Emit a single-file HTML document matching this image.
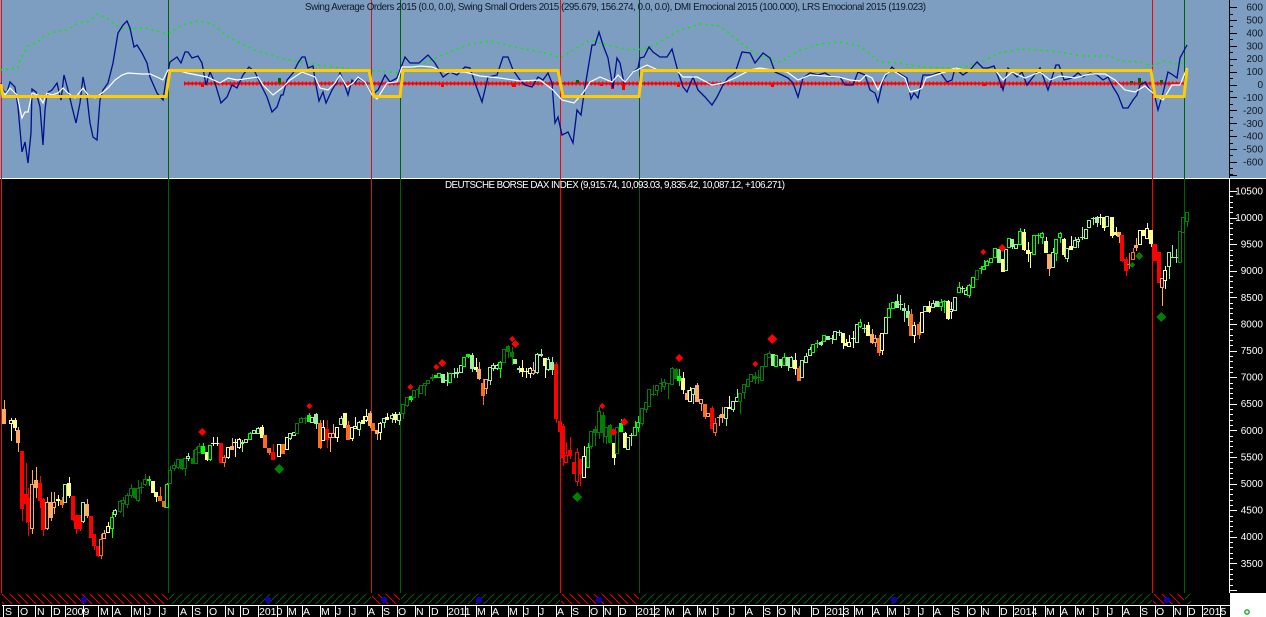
<!DOCTYPE html>
<html><head><meta charset="utf-8"><title>DAX</title>
<style>
html,body{margin:0;padding:0;background:#000;width:1266px;height:617px;overflow:hidden}
svg{display:block;font-family:"Liberation Sans",Arial,sans-serif}
.t text{font-size:10px;fill:#101a28;text-anchor:end}
.b text{font-size:10px;fill:#fff;text-anchor:end}
.m text{font-size:10.5px;fill:#fff}
</style></head><body>
<svg id="s" xmlns="http://www.w3.org/2000/svg" width="1266" height="617" viewBox="0 0 1266 617">
<defs>
<pattern id="hr" width="8" height="8" patternUnits="userSpaceOnUse"><path d="M-1 -1L9 9" stroke="#e80000" stroke-width="1" fill="none"/></pattern>
<pattern id="hg" width="8" height="8" patternUnits="userSpaceOnUse"><path d="M-1 9L9 -1" stroke="#006000" stroke-width="1" fill="none"/></pattern>
</defs>
<rect width="1266" height="617" fill="#000"/>
<rect width="1266" height="178" fill="#7d9dc1"/>
<rect x="0" y="178" width="1266" height="1" fill="#fff"/>
<rect x="1230" y="593" width="36" height="24" fill="#fff"/>

<!-- vertical markers -->
<g shape-rendering="crispEdges">
<rect x="1" y="0" width="1" height="593" fill="#e81010"/>
<rect x="168" y="0" width="1" height="593" fill="#006000"/>
<rect x="371" y="0" width="1" height="593" fill="#c81818"/>
<rect x="400" y="0" width="1" height="593" fill="#006000"/>
<rect x="560" y="0" width="1" height="593" fill="#ff0000"/>
<rect x="639" y="0" width="1" height="593" fill="#0a5028"/>
<rect x="1152" y="0" width="1" height="593" fill="#ff0000"/>
<rect x="1184" y="0" width="1" height="593" fill="#006000"/>
</g>

<!-- oscillator -->
<polyline fill="none" stroke="#00f000" stroke-width="1.5" stroke-dasharray="2 4" points="0,70 18,68 20,60 28,46 38,42 45,35 58,31 68,30 78,23 90,21 97,14 107,18 115,25 125,29 145,28 168,34 182,25 198,21 212,24 230,38 255,50 280,58 300,62 340,68 400,73 420,65 440,56 470,44 490,41 510,46 530,50 550,54 560,58 575,49 590,40 610,46 630,50 645,49 660,42 680,30 700,24 720,26 735,38 750,50 765,58 780,62 800,50 820,44 840,42 860,46 880,62 900,63 915,66 945,68 965,67 985,60 1000,53 1020,49 1040,50 1060,52 1080,56 1110,56 1120,61 1140,62 1152,66 1165,61 1175,64 1187,63"/>
<path d="M184 83.5H1187" stroke="#ff0000" stroke-width="2" fill="none"/>
<path d="M184 83.5H1187" stroke="#ff0000" stroke-width="4" stroke-dasharray="1.4 2.4" fill="none"/>
<g fill="#ff0000"><rect x="201" y="84" width="3" height="3"/><rect x="441" y="84" width="3" height="3"/><rect x="512" y="84" width="4" height="3"/><rect x="600" y="84" width="3" height="2"/><rect x="611" y="84" width="3" height="5"/><rect x="622" y="84" width="3" height="6"/><rect x="677" y="84" width="3" height="3"/><rect x="771" y="84" width="3" height="3"/><rect x="982" y="84" width="4" height="2"/><rect x="1000" y="84" width="3" height="4"/></g>
<g fill="#006400"><rect x="278" y="78" width="3" height="5"/><rect x="576" y="80" width="3" height="3"/><rect x="1130" y="81" width="3" height="2"/><rect x="1138" y="78" width="3" height="5"/><rect x="1160" y="80" width="3" height="3"/></g>
<polyline fill="none" stroke="#000f8c" stroke-width="1.3" points="1,83 4,92 7,92 10,82 15,87 18,107 22,152 25,142 28,163 31,133 32,89 36,92 40,107 43,145 45,110 47,93 52,90 57,83 61,100 64,75 68,90 72,107 76,123 80,103 83,77 87,97 90,123 93,137 97,140 100,100 103,90 108,83 113,63 118,33 123,25 127,21 130,28 134,47 137,45 142,53 147,63 150,77 157,93 163,100 166,80 170,62 177,57 181,63 185,52 188,52 192,58 198,56 202,63 206,85 210,72 215,83 221,103 227,97 232,85 237,88 243,75 249,67 255,72 260,83 267,97 272,112 277,107 281,95 283,95 287,80 293,73 298,63 302,57 305,57 308,68 313,66 315,80 319,101 323,92 326,103 332,90 337,82 340,73 343,80 348,95 352,80 355,83 358,78 365,82 372,95 378,90 385,75 390,82 397,78 400,70 405,57 410,63 419,63 428,55 435,63 443,77 450,72 457,75 465,67 470,68 475,83 482,102 488,77 497,75 503,57 508,57 513,70 520,80 525,85 532,87 538,77 543,80 548,73 552,83 555,123 558,117 562,135 568,132 573,143 577,110 581,115 585,87 592,45 595,45 599,32 603,45 608,58 613,88 617,58 620,63 624,83 632,73 638,68 640,58 644,57 649,47 653,52 660,57 667,57 672,49 677,68 683,87 687,92 693,77 698,90 705,97 712,105 717,97 723,85 728,78 735,73 742,52 750,53 755,63 763,53 770,58 775,72 782,75 788,78 793,83 798,97 803,78 810,73 818,75 825,73 832,77 840,77 845,85 853,85 858,72 865,75 870,90 875,93 878,102 883,80 892,67 897,72 907,78 911,99 914,93 918,98 923,75 932,75 940,72 947,82 952,80 955,68 963,75 970,70 977,62 983,68 988,68 994,66 1000,82 1003,90 1008,68 1017,77 1022,72 1027,85 1033,77 1040,68 1048,90 1056,65 1059,65 1064,80 1072,78 1078,73 1083,77 1090,73 1097,75 1103,80 1108,77 1113,87 1118,95 1123,108 1128,108 1133,100 1137,95 1140,85 1145,82 1148,87 1155,97 1158,110 1163,93 1168,72 1173,75 1177,78 1180,58 1187,45"/>
<polyline fill="none" stroke="#fff" stroke-width="1.2" points="1,88 5,95 10,88 17,95 22,118 25,112 28,112 32,93 38,95 43,103 47,93 52,95 58,93 63,88 68,93 75,98 83,88 88,95 95,98 102,93 108,88 115,80 122,75 128,73 142,74 150,74 157,77 163,80 168,70 177,70 187,73 197,75 207,77 220,83 228,78 237,80 258,77 263,85 273,95 282,88 290,80 302,72 315,77 320,88 328,90 335,83 340,75 347,87 353,83 358,77 365,82 372,95 377,99 387,83 397,82 402,67 413,67 420,66 432,67 445,72 465,72 480,76 500,78 520,81 540,80 553,90 562,100 574,103 583,93 590,82 600,77 612,82 618,75 625,82 633,72 647,65 660,71 677,71 683,77 697,77 712,85 723,83 735,78 750,70 760,68 773,70 787,72 798,80 810,75 839,77 850,80 860,81 866,75 872,78 878,90 885,75 892,70 905,78 910,92 918,90 922,88 926,78 935,75 945,72 955,68 965,70 975,70 985,70 995,70 1003,80 1012,72 1025,78 1040,72 1050,80 1060,76 1075,78 1090,74 1105,74 1115,80 1125,90 1135,92 1145,86 1155,95 1163,100 1172,85 1180,85 1187,68"/>
<polyline fill="none" stroke="#ffcc00" stroke-width="3" stroke-linejoin="miter" points="1,84 3,96.5 166,96.5 170,70.5 369,70.5 374,96.5 400,96.5 403,70.5 558,70.5 563,96.5 639,96.5 642,70.5 1151,70.5 1155,96.5 1184,96.5 1187,69"/>

<text x="305" y="10" font-size="9.8" fill="#101a28" textLength="621" lengthAdjust="spacing">Swing Average Orders 2015 (0.0, 0.0), Swing Small Orders 2015 (295.679, 156.274, 0.0, 0.0), DMI Emocional 2015 (100.000), LRS Emocional 2015 (119.023)</text>
<text x="445" y="188" font-size="9.8" fill="#fff" textLength="340" lengthAdjust="spacing">DEUTSCHE BORSE DAX INDEX (9,915.74, 10,093.03, 9,835.42, 10,087.12, +106.271)</text>

<!-- axes -->
<rect x="1229" y="0" width="1" height="178" fill="#000"/>
<rect x="1229" y="179" width="1" height="414" fill="#fff"/>
<g id="ticks" shape-rendering="crispEdges"></g>
<g class="t">
<text x="1263" y="10.5">600</text><text x="1263" y="23.5">500</text><text x="1263" y="36.5">400</text><text x="1263" y="49.5">300</text><text x="1263" y="62">200</text><text x="1263" y="75">100</text><text x="1263" y="88">0</text><text x="1263" y="101">-100</text><text x="1263" y="114">-200</text><text x="1263" y="127">-300</text><text x="1263" y="139.5">-400</text><text x="1263" y="152.5">-500</text><text x="1263" y="165.5">-600</text>
</g>
<g class="b">
<text x="1263" y="194.5">10500</text><text x="1263" y="221">10000</text><text x="1263" y="247.5">9500</text><text x="1263" y="274">9000</text><text x="1263" y="301">8500</text><text x="1263" y="327.5">8000</text><text x="1263" y="354">7500</text><text x="1263" y="380.5">7000</text><text x="1263" y="407">6500</text><text x="1263" y="434">6000</text><text x="1263" y="460.5">5500</text><text x="1263" y="487">5000</text><text x="1263" y="513.5">4500</text><text x="1263" y="540">4000</text><text x="1263" y="567">3500</text>
</g>

<!-- hatch strip -->
<g>
<rect x="2" y="594" width="166" height="10" fill="url(#hr)"/>
<rect x="169" y="594" width="202" height="10" fill="url(#hg)"/>
<rect x="372" y="594" width="28" height="10" fill="url(#hr)"/>
<rect x="401" y="594" width="159" height="10" fill="url(#hg)"/>
<rect x="561" y="594" width="78" height="10" fill="url(#hr)"/>
<rect x="640" y="594" width="512" height="10" fill="url(#hg)"/>
<rect x="1153" y="594" width="31" height="10" fill="url(#hr)"/>
<rect x="1185" y="594" width="6" height="10" fill="url(#hg)"/>
</g>
<g fill="#400040" stroke="#0000e0" stroke-width="1.6">
<circle cx="84" cy="600" r="2.4"/><circle cx="268" cy="600" r="2.4"/><circle cx="384" cy="600" r="2.4"/><circle cx="479" cy="600" r="2.4"/><circle cx="599" cy="600" r="2.4"/><circle cx="894" cy="600" r="2.4"/><circle cx="1167" cy="600" r="2.4"/>
</g>

<g id="candles" shape-rendering="crispEdges"></g>

<g fill="#ff0000" shape-rendering="crispEdges" id="dr"></g>

<!-- time axis -->
<rect x="2" y="605" width="1228" height="1" fill="#fff"/>
<g id="seps" shape-rendering="crispEdges"></g>
<g class="m">
<text x="5" y="615">S</text><text x="20" y="615">O</text><text x="37" y="615">N</text><text x="53" y="615">D</text><text x="66" y="615">2009</text>
<text x="100" y="615">M</text><text x="114" y="615">A</text><text x="133" y="615">M</text><text x="146" y="615">J</text><text x="161" y="615">J</text><text x="180" y="615">A</text><text x="194" y="615">S</text><text x="209" y="615">O</text><text x="227" y="615">N</text><text x="242" y="615">D</text><text x="259" y="615">2010</text>
<text x="288" y="615">M</text><text x="303" y="615">A</text><text x="321" y="615">M</text><text x="336" y="615">J</text><text x="351" y="615">J</text><text x="368" y="615">A</text><text x="383" y="615">S</text><text x="398" y="615">O</text><text x="416" y="615">N</text><text x="431" y="615">D</text><text x="448" y="615">2011</text>
<text x="477" y="615">M</text><text x="492" y="615">A</text><text x="509" y="615">M</text><text x="524" y="615">J</text><text x="539" y="615">J</text><text x="557" y="615">A</text><text x="572" y="615">S</text><text x="590" y="615">O</text><text x="604" y="615">N</text><text x="619" y="615">D</text><text x="637" y="615">2012</text>
<text x="666" y="615">M</text><text x="684" y="615">A</text><text x="698" y="615">M</text><text x="714" y="615">J</text><text x="730" y="615">J</text><text x="746" y="615">A</text><text x="764" y="615">S</text><text x="778" y="615">O</text><text x="793" y="615">N</text><text x="812" y="615">D</text><text x="826" y="615">2013</text>
<text x="855" y="615">M</text><text x="873" y="615">A</text><text x="888" y="615">M</text><text x="905" y="615">J</text><text x="919" y="615">J</text><text x="934" y="615">A</text><text x="953" y="615">S</text><text x="968" y="615">O</text><text x="982" y="615">N</text><text x="1000" y="615">D</text><text x="1014" y="615">2014</text>
<text x="1046" y="615">M</text><text x="1061" y="615">A</text><text x="1076" y="615">M</text><text x="1094" y="615">J</text><text x="1108" y="615">J</text><text x="1123" y="615">A</text><text x="1141" y="615">S</text><text x="1156" y="615">O</text><text x="1174" y="615">N</text><text x="1188" y="615">D</text><text x="1203" y="615">2015</text>
</g>
<circle cx="1247" cy="612" r="2.2" fill="#e8f0a0" stroke="#1aa84a" stroke-width="1.4"/>
</svg>
<script>
var D="4 A 409 423 400 423;11 y 420 423 418 440;15 Y 420 427 418 430;18 A 430 442 427 451;22 R 451 508 451 520;26 R 494 503 463 522;28 R 498 521 488 535;32 a 484 528 470 533;36 A 480 487 467 497;40 R 483 500 476 507;43 R 499 529 498 535;47 a 502 528 497 529;51 A 502 517 492 520;54 a 502 507 492 513;58 y 499 500 495 505;62 O 500 504 497 507;65 l 484 502 484 502;69 Y 483 495 477 497;73 R 496 519 496 520;76 R 515 528 515 533;80 R 515 528 515 530;83 l 502 521 502 522;87 A 504 515 499 517;91 R 516 537 516 537;94 R 534 545 534 549;98 R 546 555 546 556;101 o 539 555 534 558;104 a 533 538 530 538;108 y 526 532 522 532;112 g 517 528 512 537;115 l 510 514 509 516;120 d 501 511 500 512;123 d 500 503 497 516;127 d 495 504 493 507;131 d 488 495 484 497;135 D 488 497 488 498;138 d 488 500 480 501;141 d 487 487 482 493;145 d 479 484 474 485;149 g 479 480 476 485;153 Y 481 492 481 492;156 Y 492 496 492 501;160 O 496 500 487 500;164 O 501 506 501 507;167 g 484 507 483 507;170 d 470 483 466 483;174 d 465 468 462 470;178 d 459 467 459 468;182 D 459 468 459 469;185 d 458 468 458 475;188 l 456 458 453 460;193 D 458 463 450 463;196 d 449 463 447 463;199 d 446 452 443 452;203 G 446 453 443 453;207 Y 452 459 452 460;210 g 445 459 445 460;213 y 443 443 437 445;217 y 443 443 437 445;221 R 443 462 443 462;224 o 457 462 455 466;228 y 447 457 447 458;232 A 446 449 438 449;235 y 442 442 439 456;239 y 439 447 438 448;242 l 442 443 440 451;246 l 439 442 439 442;250 g 433 439 432 439;254 l 430 433 430 433;258 l 428 433 427 433;262 Y 427 437 425 437;265 O 435 447 435 447;269 O 448 452 448 454;273 R 452 459 444 459;279 y 444 456 444 456;283 O 444 453 444 453;287 y 437 449 437 449;290 l 433 438 433 439;294 l 432 435 432 435;297 d 423 433 423 433;301 d 418 422 417 422;305 d 418 418 417 423;309 G 415 421 413 421;312 l 417 422 417 422;316 L 414 423 413 428;320 O 423 447 420 448;323 y 427 440 420 440;327 R 429 439 420 447;330 a 433 437 433 451;333 a 433 437 424 437;337 y 427 437 427 441;341 l 418 424 416 424;345 Y 413 427 413 427;348 O 425 439 421 439;352 y 427 438 427 440;355 y 426 428 417 428;359 l 422 429 421 435;363 Y 420 423 416 423;366 y 416 420 409 421;370 A 413 425 411 427;373 O 423 430 423 430;377 A 430 433 430 439;380 y 423 432 422 439;384 l 418 422 418 427;387 Y 417 419 413 419;392 l 415 418 413 422;395 Y 414 419 412 422;399 l 414 420 412 424;403 d 404 413 404 418;407 d 397 405 397 406;411 G 396 399 396 401;414 d 390 397 390 397;418 d 389 389 387 397;421 d 385 393 385 393;425 d 383 385 383 395;428 d 380 383 380 383;432 d 377 378 374 380;436 G 375 377 375 377;439 g 373 377 373 377;443 L 374 382 374 382;447 l 380 380 372 385;450 g 373 382 373 382;454 l 373 373 368 377;457 l 372 373 368 377;461 l 365 372 365 372;464 g 357 366 357 366;468 G 354 356 354 357;472 L 355 368 353 371;476 Y 367 369 358 371;479 A 369 378 362 379;483 O 383 395 379 404;486 a 379 388 379 393;490 l 367 380 367 384;493 l 365 368 363 370;497 l 365 368 364 369;500 g 362 368 361 377;504 d 349 362 349 362;508 D 346 351 345 357;512 D 352 356 347 364;515 L 359 363 359 363;519 l 368 369 366 372;522 Y 368 371 360 376;526 y 371 371 368 377;530 y 368 373 367 377;533 a 370 373 362 374;537 l 354 372 353 373;541 l 354 355 349 356;545 Y 358 365 358 377;548 l 359 369 357 370;552 L 362 369 357 374;556 R 364 418 362 422;560 R 421 431 416 431;563 R 426 457 424 465;566 r 455 462 442 462;570 R 450 455 437 458;574 R 462 473 462 473;577 r 452 481 448 485;580 R 459 473 459 485;584 y 456 477 446 477;588 g 447 467 443 467;591 d 431 446 431 448;595 D 429 432 426 445;599 d 411 432 407 438;603 D 415 432 412 442;606 d 427 436 427 443;610 D 425 442 424 442;614 Y 443 457 443 464;617 d 427 453 427 453;621 G 423 431 419 431;625 Y 433 447 432 447;628 l 437 449 437 449;631 l 435 435 433 445;635 g 427 435 421 435;638 g 422 427 416 431;642 d 408 423 408 425;646 d 402 409 402 412;649 d 389 406 389 406;653 d 394 394 385 395;657 d 385 390 385 395;661 d 383 383 378 391;664 d 382 386 379 389;668 d 383 383 383 398;672 d 368 384 367 384;676 D 369 378 368 378;679 G 376 380 369 385;683 Y 378 389 372 393;687 A 393 399 390 399;690 y 390 401 387 401;693 l 388 394 388 403;697 A 385 401 383 401;701 a 399 403 399 410;705 O 404 416 404 418;708 a 413 416 413 416;712 R 408 428 406 428;715 o 423 432 418 435;719 a 417 417 415 425;722 A 414 417 407 422;726 l 407 418 407 425;729 y 407 408 396 408;733 l 401 409 401 411;737 l 397 401 389 401;740 d 393 401 393 413;744 d 384 392 384 398;748 d 379 386 379 386;751 d 374 381 374 381;755 D 376 378 372 383;758 d 377 377 370 383;762 d 366 380 366 380;766 d 354 366 354 366;769 d 353 357 351 357;773 L 354 365 354 365;776 g 355 366 355 366;781 L 359 365 359 367;784 g 357 365 353 365;788 L 357 365 357 370;791 l 357 367 356 367;795 Y 360 368 353 374;799 O 368 380 366 380;802 l 360 377 360 377;806 l 356 362 353 362;810 l 349 355 347 355;813 g 344 352 344 352;817 g 343 343 340 347;821 L 342 344 341 345;824 g 335 341 335 341;828 L 336 339 336 339;832 l 338 338 335 343;835 l 331 339 331 339;839 l 332 332 330 335;843 Y 333 342 333 348;846 Y 343 345 339 345;849 y 342 346 335 346;853 y 338 338 331 347;857 l 324 342 324 342;860 g 322 326 319 327;864 l 328 328 324 332;868 Y 325 335 322 335;872 A 334 342 329 343;875 a 338 342 335 346;879 O 338 352 335 355;882 y 333 350 333 354;886 l 317 333 317 333;889 g 308 317 303 317;893 g 302 308 302 308;897 L 301 307 294 307;900 l 304 304 295 309;904 L 308 310 303 321;908 L 311 317 305 325;911 O 314 335 309 335;914 y 325 335 322 342;919 O 324 334 322 338;922 y 312 332 312 332;925 l 306 311 306 311;929 Y 306 311 301 312;933 l 303 307 300 307;937 L 301 306 301 306;941 g 302 306 299 310;944 g 301 301 300 312;948 Y 301 318 300 319;951 y 309 311 302 318;955 l 297 310 297 310;959 g 287 292 282 292;962 l 288 288 286 292;966 l 290 294 287 294;969 g 285 295 284 297;973 g 277 287 277 287;977 d 270 279 270 279;981 g 268 268 266 273;984 g 266 269 260 269;987 g 261 265 260 265;991 g 258 262 258 262;995 g 248 257 248 257;999 L 249 262 248 262;1003 Y 259 271 259 271;1006 l 249 270 249 270;1009 g 238 247 238 247;1012 L 239 246 239 248;1016 l 244 248 244 248;1020 g 231 244 228 244;1024 Y 232 249 229 250;1028 Y 250 253 242 261;1030 y 252 252 252 267;1034 g 235 254 235 254;1038 g 235 235 233 243;1042 g 233 237 232 243;1046 Y 241 252 237 252;1049 A 254 268 254 275;1053 l 252 267 248 267;1056 g 239 253 239 260;1060 g 233 237 232 242;1064 Y 239 254 238 256;1067 l 248 258 248 261;1071 Y 246 249 236 249;1075 l 240 247 237 247;1078 l 239 241 237 247;1082 l 237 237 227 239;1086 l 229 238 229 238;1089 l 220 227 220 227;1093 l 218 218 217 224;1097 L 217 222 216 226;1100 y 217 217 214 224;1104 Y 217 227 217 230;1107 l 216 226 216 226;1112 Y 217 235 217 237;1116 Y 232 234 227 235;1119 A 232 236 232 242;1122 R 235 260 235 261;1126 R 259 270 257 275;1129 o 264 264 253 268;1133 o 252 259 248 259;1136 A 245 247 238 250;1140 y 230 244 230 244;1144 Y 230 235 230 235;1147 y 228 238 223 238;1151 Y 230 243 230 246;1155 R 244 260 244 260;1159 R 252 282 252 282;1162 a 278 287 278 305;1165 y 270 280 266 288;1169 l 252 266 252 278;1172 l 257 257 245 257;1176 l 257 257 249 262;1180 d 231 262 231 262;1183 d 217 232 217 232;1187 d 212 221 212 226";
var C={R:"#ff0000",O:"#ff6a20",A:"#ffa860",Y:"#ffff90",L:"#9cf09c",G:"#00ff00",D:"#008000"};
var h="";
D.split(";").forEach(function(r){var p=r.split(" "),x=+p[0],k=p[1],t=+p[2],b=+p[3],u=+p[4],l=+p[5],K=k.toUpperCase(),c=C[K],f=k===K;
 h+='<rect x="'+x+'" y="'+u+'" width="1" height="'+(l-u+1)+'" fill="'+c+'"/>';
 if(b<=t){h+='<rect x="'+(x-2)+'" y="'+t+'" width="5" height="1" fill="'+c+'"/>';return;}
 if(f)h+='<rect x="'+(x-2)+'" y="'+t+'" width="4" height="'+(b-t+1)+'" fill="'+c+'"/>';
 else h+='<rect x="'+(x-1.5)+'" y="'+(t+.5)+'" width="3" height="'+(b-t)+'" fill="#000" stroke="'+c+'" stroke-width="1"/>';
});
document.getElementById("candles").innerHTML=h;
var dm=[[202,432,4,1],[309,406,3,1],[436,367,3,1],[442,363,4,1],[410,387,3,1],[512,339,3,1],[515,344,4,1],[602,406,3,1],[613,432,4,1],[624,422,4,1],[679,358,4,1],[772,339,5,1],[755,364,3,1],[983,252,3,1],[1002,248,4,1],[279,469,5,0],[577,497,5,0],[1139,256,4,0],[1132,265,3,0],[1161,317,5,0]];
h="";dm.forEach(function(d){var x=d[0],y=d[1],r=d[2];h+='<polygon points="'+(x-r)+','+y+' '+x+','+(y-r)+' '+(x+r)+','+y+' '+x+','+(y+r)+'" fill="'+(d[3]?"#ff0000":"#008000")+'"/>';});
document.getElementById("dr").innerHTML=h;
h="";var i,y;
for(i=0;i<=26;i++){y=Math.round(7.1+i*6.45);h+='<rect x="1230" y="'+y+'" width="'+(i%2?3:7)+'" height="1" fill="#000"/>';}
h+='<rect x="1230" y="174" width="3" height="1" fill="#000"/>';
for(i=0;i<=75;i++){y=Math.round(191+i*5.32);if(y>592)break;h+='<rect x="1230" y="'+y+'" width="'+(i%5?3:7)+'" height="1" fill="#fff"/>';}
document.getElementById("ticks").innerHTML=h;
var S=[3,18,35,51,65,83,98,112,131,144,159,178,192,207,225,240,258,277,287,302,320,335,349,367,382,397,415,429,447,465,476,491,508,523,538,556,571,589,603,618,636,654,665,683,697,713,729,745,763,777,792,811,825,843,854,872,887,904,918,933,952,967,981,999,1013,1033,1045,1060,1075,1093,1107,1122,1140,1155,1173,1187,1202,1220];
h="";S.forEach(function(x){h+='<rect x="'+x+'" y="605" width="1" height="12" fill="#fff"/>';});
document.getElementById("seps").innerHTML=h;
</script>
</body></html>
